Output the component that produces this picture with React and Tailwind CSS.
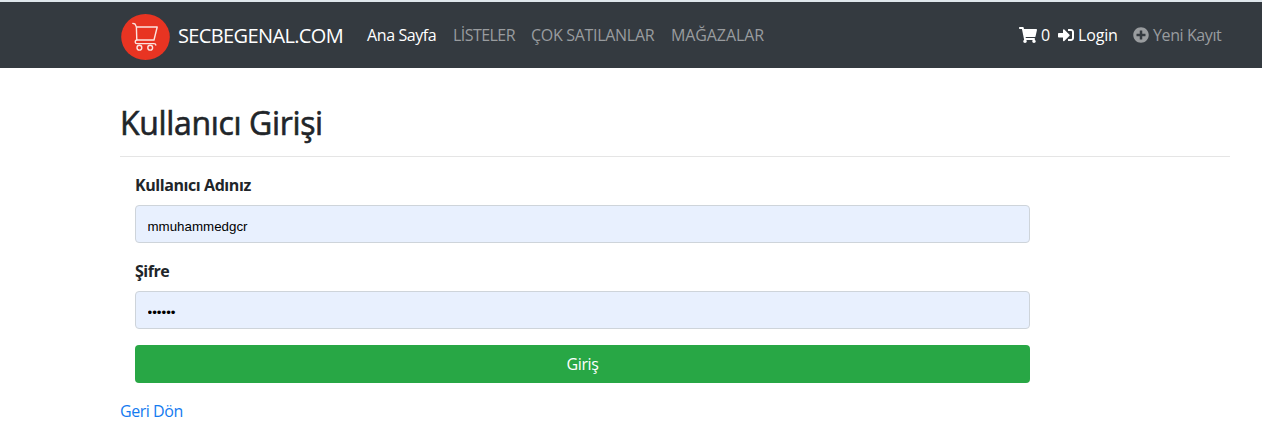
import { FaShoppingCart, FaSignInAlt, FaPlusCircle } from "react-icons/fa";

function Logo() {
  return (
    <svg className="h-[46px] w-[49px] shrink-0" viewBox="0 0 49 46" fill="none">
      <ellipse cx="24.5" cy="23" rx="24.3" ry="22.9" fill="#e83422" />
      <g stroke="#fbe3df" strokeWidth="1.4" strokeLinecap="round" strokeLinejoin="round">
        <path d="M11.8 9.4 L14 10 L15.4 13 H36.2 L33 26 H15.8 L15.4 13" />
        <path d="M15.8 26 C13.6 26.4 13.6 29.6 16 29.6 H33 C34.4 29.6 34.8 30 34.8 31" />
        <circle cx="18.4" cy="33.7" r="2.4" />
        <circle cx="29.2" cy="33.7" r="2.4" />
      </g>
    </svg>
  );
}

function Navbar() {
  return (
    <nav className="flex h-[66px] items-center bg-[#343a40] pl-[121px] text-base text-white">
      <a className="mt-[3px] flex w-[246px] items-center gap-2">
        <Logo />
        <span className="-mt-[2px] whitespace-nowrap text-xl tracking-[-0.63px]">SECBEGENAL.COM</span>
      </a>
      <a className="w-[86px] whitespace-nowrap tracking-[-0.4px]">Ana Sayfa</a>
      <a className="w-[78px] whitespace-nowrap tracking-[-0.55px] text-[#999c9f]">LİSTELER</a>
      <a className="w-[140px] whitespace-nowrap tracking-[-0.3px] text-[#999c9f]">ÇOK SATILANLAR</a>
      <a className="w-[348px] whitespace-nowrap tracking-[-0.1px] text-[#999c9f]">MAĞAZALAR</a>
      <a className="flex w-[39px] items-center gap-1">
        <FaShoppingCart className="h-4 w-[18px] shrink-0" />
        <span>0</span>
      </a>
      <a className="flex w-[75px] items-center gap-1">
        <FaSignInAlt className="h-4 w-4 shrink-0" />
        <span className="tracking-[-0.15px]">Login</span>
      </a>
      <a className="flex items-center gap-1 text-[#999c9f]">
        <FaPlusCircle className="h-4 w-4 shrink-0" />
        <span className="whitespace-nowrap tracking-[-0.4px]">Yeni Kayıt</span>
      </a>
    </nav>
  );
}

export default function App() {
  return (
    <div className="h-[439px] overflow-hidden border-t-2 border-[#dfe7ec] bg-white font-['Open_Sans','Noto_Sans',sans-serif] text-base text-[#212529]">
      <Navbar />
      <main className="ml-[120px] w-[1110px] pt-9">
        <h2 className="h-[53px] border-b border-[#e5e5e5] text-[32px] leading-[38px] font-medium tracking-[-0.35px] [-webkit-text-stroke:0.6px_#212529]">
          Kullanıcı Girişi
        </h2>
        <form className="ml-[15px] w-[895px] pt-4">
          <label className="mb-2 block h-6 font-bold tracking-[-0.42px]">Kullanıcı Adınız</label>
          <input
            type="text"
            defaultValue="mmuhammedgcr"
            className="mb-4 block h-[38px] w-full rounded border border-[#ced4da] bg-[#e8f0fe] px-[11.5px] pt-1 font-['Liberation_Sans',sans-serif] text-[13.333px] text-black"
          />
          <label className="mb-2 block h-6 font-bold tracking-[-0.5px]">Şifre</label>
          <input
            type="password"
            defaultValue="123456"
            className="mb-4 block h-[38px] w-full rounded border border-[#ced4da] bg-[#e8f0fe] px-[11.5px] pt-1 font-['Liberation_Sans',sans-serif] text-[13.333px] text-black"
          />
          <button type="button" className="block h-[38px] w-full rounded bg-[#28a745] tracking-[-0.4px] text-white">
            Giriş
          </button>
        </form>
        <a className="mt-4 block h-6 tracking-[-0.45px] text-[#147bf0]">Geri Dön</a>
      </main>
    </div>
  );
}
